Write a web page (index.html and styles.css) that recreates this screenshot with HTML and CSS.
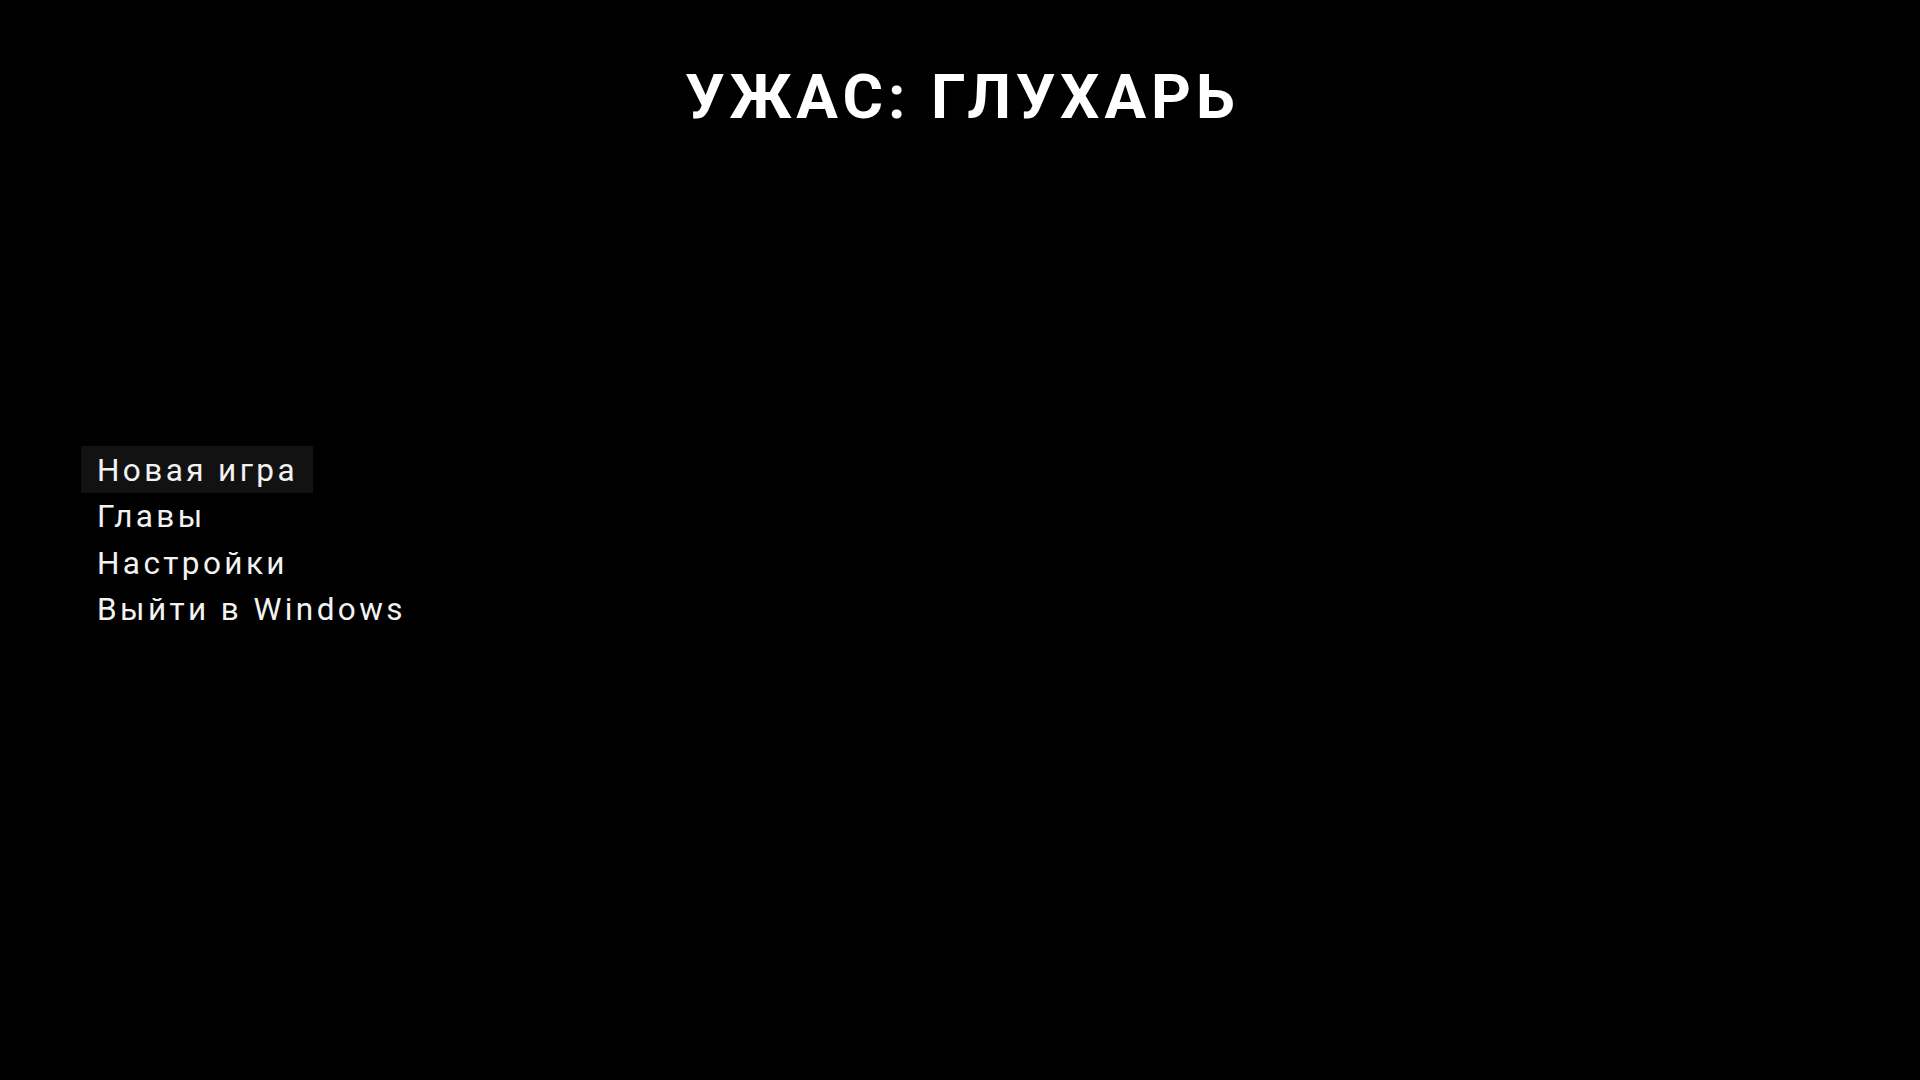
FILE: index.html
```html
<!DOCTYPE html>
<html lang="ru">
<head>
<meta charset="utf-8">
<title>УЖАС: ГЛУХАРЬ</title>
<link rel="stylesheet" href="styles.css">
</head>
<body>
<div class="screen">
  <h1 class="title">УЖАС: ГЛУХАРЬ</h1>
  <nav class="menu">
    <div class="item active">Новая игра</div>
    <div class="item">Главы</div>
    <div class="item">Настройки</div>
    <div class="item">Выйти в Windows</div>
  </nav>
</div>
</body>
</html>
```

FILE: styles.css
```css
html, body {
  margin: 0;
  padding: 0;
  background: #000;
  width: 100%;
  height: 100%;
}
.screen {
  width: 1920px;
  height: 1080px;
  display: flex;
  flex-direction: column;
  font-family: Roboto, "Liberation Sans", sans-serif;
  color: #fff;
}
.title {
  margin: 62px 0 0 0;
  padding-left: 5px;
  font-size: 62px;
  line-height: 70px;
  font-weight: 700;
  letter-spacing: 5px;
  text-align: center;
}
.menu {
  margin: 314px 0 0 81px;
  display: flex;
  flex-direction: column;
  align-items: flex-start;
}
.item {
  box-sizing: border-box;
  height: 46.5px;
  line-height: 45px;
  padding: 1.5px 15px 0 16px;
  font-size: 31.5px;
  letter-spacing: 3.4px;
  color: #f2f2f2;
}
.item.active {
  background: #121212;
}
```
